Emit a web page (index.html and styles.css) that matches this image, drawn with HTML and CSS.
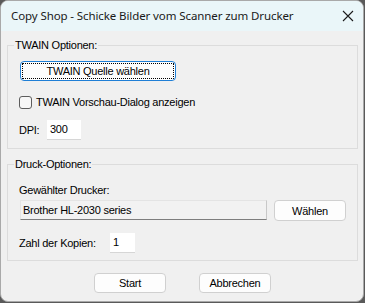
FILE: index.html
```html
<!DOCTYPE html>
<html>
<head>
<meta charset="utf-8">
<link rel="stylesheet" href="styles.css">
</head>
<body>
<div class="window">
  <div class="titlebar">
    <span class="title">Copy Shop - Schicke Bilder vom Scanner zum Drucker</span>
    <svg class="close" width="12" height="12" viewBox="0 0 12 12"><path d="M1 1 L11 11 M11 1 L1 11" stroke="#1b1b1b" stroke-width="1.1" fill="none"/></svg>
  </div>
  <div class="content">
    <fieldset class="group group-twain">
      <legend>TWAIN Optionen:</legend>
      <button class="btn btn-focus btn-source"><span class="focus-rect">TWAIN Quelle wählen</span></button>
      <label class="check-row"><span class="checkbox"></span><span>TWAIN Vorschau-Dialog anzeigen</span></label>
      <div class="field-row">
        <span class="lbl-dpi">DPI:</span>
        <span class="input input-dpi">300</span>
      </div>
    </fieldset>
    <fieldset class="group group-print">
      <legend>Druck-Optionen:</legend>
      <div class="lbl-printer">Gewählter Drucker:</div>
      <div class="printer-row">
        <span class="readonly">Brother HL-2030 series</span>
        <button class="btn btn-choose">Wählen</button>
      </div>
      <div class="field-row copies-row">
        <span class="lbl-copies">Zahl der Kopien:</span>
        <span class="input input-copies">1</span>
      </div>
    </fieldset>
    <div class="actions">
      <button class="btn btn-action">Start</button>
      <button class="btn btn-action">Abbrechen</button>
    </div>
  </div>
</div>
</body>
</html>
```

FILE: styles.css
```css
html, body {
  margin: 0;
  padding: 0;
}
body {
  width: 365px;
  height: 303px;
  background: #5a5a5a;
  overflow: hidden;
  font-family: "Liberation Sans", Arial, sans-serif;
  font-size: 11px;
  letter-spacing: -0.25px;
  color: #000;
}
.window {
  box-sizing: border-box;
  width: 364px;
  height: 302px;
  border: 1px solid #a9a9a9;
  border-radius: 8px;
  background: #f0f0f0;
  overflow: hidden;
}
.titlebar {
  height: 30px;
  background: #eaf6f9;
  display: flex;
  align-items: center;
  justify-content: space-between;
  padding: 0 9px 0 10px;
}
.title {
  font-family: "Noto Sans", "Open Sans", sans-serif;
  font-size: 11.5px;
  letter-spacing: -0.1px;
  color: #1a1a1a;
  line-height: 16px;
  padding-bottom: 1px;
}
.close {
  display: block;
  margin-top: -1px;
}
.content {
  padding: 8px 0 0 6px;
}
.group {
  box-sizing: border-box;
  width: 351px;
  margin: 0;
  padding: 0;
  border: 1px solid #dcdcdc;
  min-width: 0;
}
.group legend {
  padding: 0 1px;
  margin-left: 6px;
  line-height: 13px;
  font-size: 11px;
}
.group-twain {
  height: 110px;
}
.group-print {
  margin-top: 9px;
  height: 103px;
}
.btn {
  box-sizing: border-box;
  font-family: "Liberation Sans", Arial, sans-serif;
  font-size: 11px;
  letter-spacing: -0.25px;
  color: #000;
  background: #fdfdfd;
  border: 1px solid #d0d0d0;
  border-radius: 4px;
  padding: 0;
  height: 20px;
  line-height: 16px;
  margin: 0;
}
.btn-focus {
  border: 1px solid #1f7fd6;
  padding: 1px;
  display: block;
}
.focus-rect {
  display: block;
  box-sizing: border-box;
  height: 16px;
  line-height: 14px;
  border: 1px dotted #000;
  border-radius: 1px;
}
.btn-source {
  width: 156px;
  margin: 9px 0 0 12px;
}
.check-row {
  display: flex;
  align-items: center;
  gap: 4px;
  margin: 15px 0 0 11px;
  line-height: 13px;
}
.checkbox {
  box-sizing: border-box;
  width: 13px;
  height: 13px;
  border: 1px solid #5d5d5d;
  border-radius: 3px;
  background: #f7f7f7;
}
.field-row {
  display: flex;
  align-items: center;
  margin: 11px 0 0 11px;
}
.input {
  box-sizing: border-box;
  display: block;
  height: 20px;
  line-height: 18px;
  background: #fff;
  border-bottom: 1px solid #d6d6d6;
  padding-left: 3px;
}
.lbl-dpi {
  width: 28px;
}
.input-dpi {
  width: 34px;
}
.lbl-printer {
  margin: 13px 0 0 11px;
  line-height: 13px;
}
.printer-row {
  display: flex;
  align-items: center;
  margin: 2px 0 0 12px;
  gap: 7px;
}
.readonly {
  box-sizing: border-box;
  width: 247px;
  height: 20px;
  line-height: 18px;
  padding-left: 2px;
  border: 1px solid #e4e4e4;
  border-bottom-color: #7e7e7e;
  border-right-color: #c8c8c8;
  background: #f2f2f2;
}
.btn-choose {
  width: 72px;
  height: 21px;
  margin-top: 1px;
}
.copies-row {
  margin: 12px 0 0 11px;
}
.lbl-copies {
  width: 91px;
}
.input-copies {
  width: 25px;
}
.actions {
  display: flex;
  gap: 33px;
  margin: 12px 0 0 87px;
}
.btn-action {
  width: 72px;
  height: 20px;
}
```
